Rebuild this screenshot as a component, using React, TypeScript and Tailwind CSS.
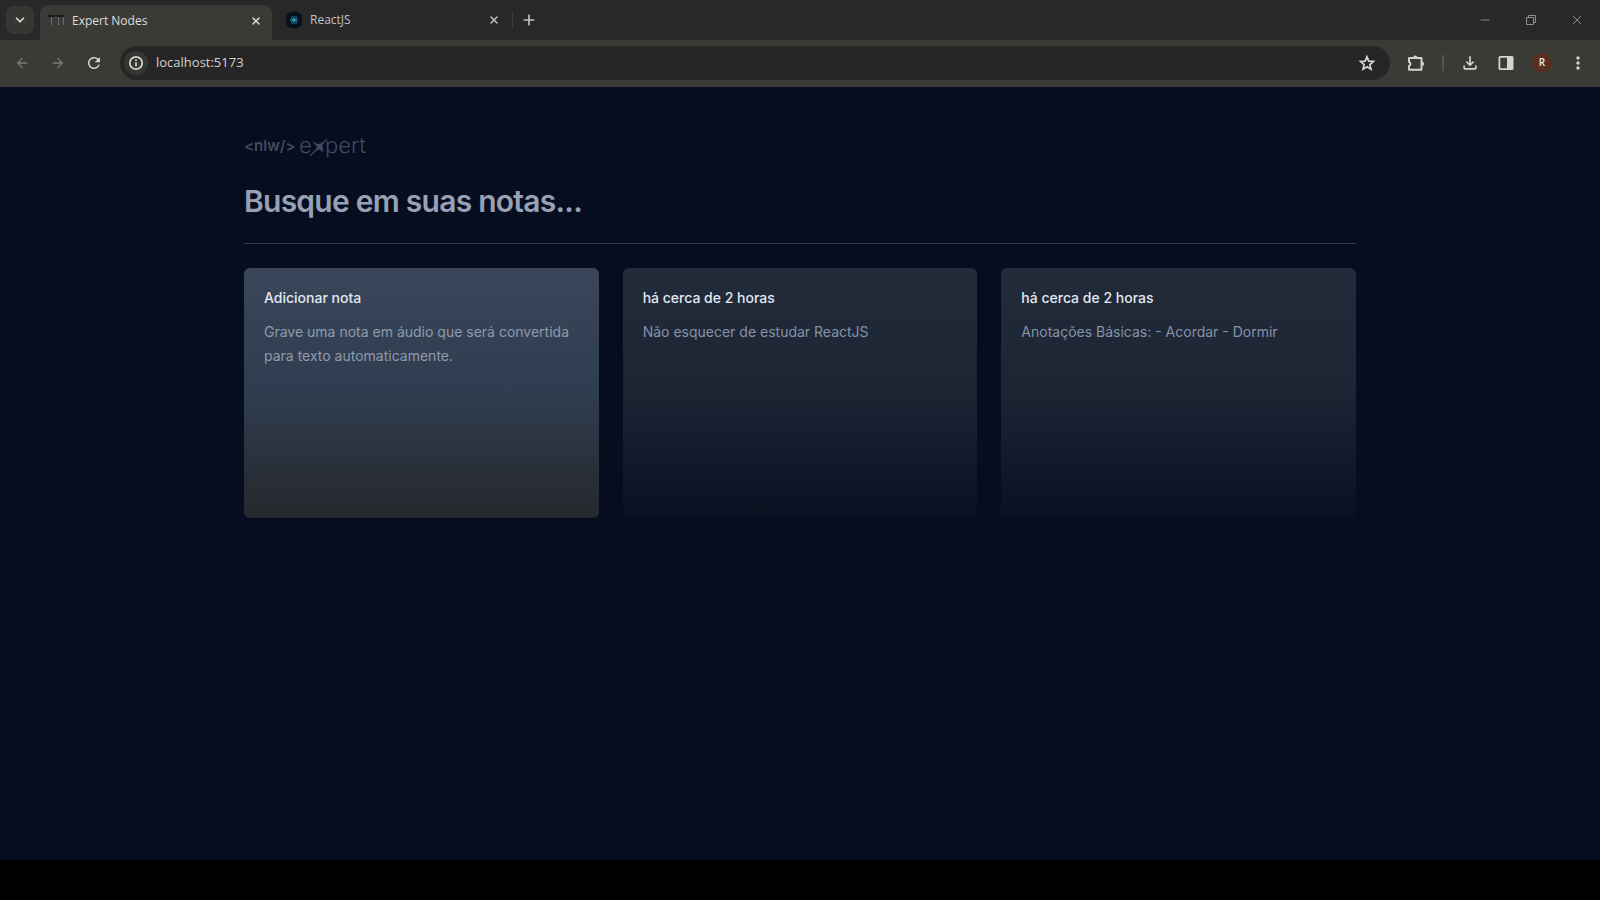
import { ChevronDown, Minus, Plus, X } from 'lucide-react';
import { MdOutlineFileDownload, MdMoreVert, MdRefresh, MdArrowBack, MdArrowForward } from 'react-icons/md';

const notes = [
  { date: 'há cerca de 2 horas', content: 'Não esquecer de estudar ReactJS' },
  { date: 'há cerca de 2 horas', content: 'Anotações Básicas: - Acordar - Dormir' },
];

function ExpertIcon() {
  return (
    <svg viewBox="0 0 16 12" className="h-3 w-4" fill="none" stroke="#8b8b96" aria-hidden="true">
      <path d="M0 1h7M8.500 1h7.500" stroke="#0c0c14" strokeWidth="1.400" />
      <path d="M3.500 2v8M10.500 2v8M15.500 2v8" strokeWidth=".600" />
    </svg>
  );
}

function ReactIcon() {
  return (
    <svg viewBox="0 0 16 16" className="size-4" aria-hidden="true">
      <rect width="16" height="16" rx="6" fill="#06101f" />
      <g fill="none" stroke="#1d6579" strokeWidth=".9">
        <ellipse cx="8" cy="8" rx="4" ry="1.7" />
        <ellipse cx="8" cy="8" rx="4" ry="1.7" transform="rotate(60 8 8)" />
        <ellipse cx="8" cy="8" rx="4" ry="1.7" transform="rotate(120 8 8)" />
      </g>
      <circle cx="8" cy="8" r="1.8" fill="#2798ab" />
    </svg>
  );
}

function InfoIcon() {
  return (
    <svg viewBox="0 0 16 16" className="size-4" fill="none" stroke="currentColor" strokeWidth="1.700" aria-hidden="true">
      <circle cx="8" cy="8" r="6.200" />
      <path d="M8 7.200v4M8 4.500v1.600" />
    </svg>
  );
}

function StarIcon() {
  return (
    <svg viewBox="0 0 18 18" className="size-[18px]" fill="none" stroke="currentColor" strokeWidth="1.700" aria-hidden="true">
      <path d="m9 2.800 1.800 4.300 4.700.4-3.600 3.100 1.100 4.600L9 12.700l-4 2.500 1.100-4.600L2.500 7.500l4.700-.4L9 2.800Z" />
    </svg>
  );
}

function ExtensionIcon() {
  return (
    <svg viewBox="0 0 20 20" className="size-5" aria-hidden="true">
      <path d="M3 5h12.500v11.800H3v-3.900a2.100 2.100 0 0 0 0-4V5Z" fill="none" stroke="currentColor" strokeWidth="1.900" strokeLinejoin="round" />
      <path d="M7.200 4.500a2.100 2.100 0 0 1 4.200 0ZM16 8.800a2.100 2.100 0 0 1 0 4.200Z" fill="currentColor" />
    </svg>
  );
}

function Logo() {
  return (
    <svg viewBox="0 0 126 24" className="h-6 w-[126px] overflow-visible" role="img" aria-label="nlw expert" fill="#414a62">
      <text x="0" y="16" fontSize="15" fontWeight="600" fontFamily="Inter, sans-serif">&lt;nlw/&gt;</text>
      <text x="55" y="18" fontSize="22" fontWeight="300" fontFamily="Inter, sans-serif">e</text>
      <path d="m66 21 17-17M69.500 7l9.500 10" stroke="#414a62" strokeWidth="1.200" fill="none" />
      <path d="m71 8 4 1 4-2-1 4 2 4-4-1-4 2 1-4Z" />
      <text x="81" y="18" fontSize="22" fontWeight="300" fontFamily="Inter, sans-serif">pert</text>
    </svg>
  );
}

function BrowserChrome() {
  return (
    <header className="font-['Open_Sans','Noto_Sans',sans-serif] text-xs text-[#dededc]">
      <div className="flex h-10 items-center bg-[#282829]">
        <button aria-label="Search tabs" className="ml-1.5 grid size-7 place-items-center rounded-lg bg-[#363632]">
          <ChevronDown className="size-3.5" strokeWidth={3} />
        </button>
        <div className="ml-1.5 flex h-full w-[232px] items-end">
          <div className="flex h-[35px] w-full items-center gap-2 rounded-t-lg bg-[#3a3a36] pr-2 pb-1 pl-2">
            <ExpertIcon />
            <span className="flex-1">Expert Nodes</span>
            <button aria-label="Close Expert Nodes" className="grid size-4 place-items-center"><X className="size-3" strokeWidth={3} /></button>
          </div>
        </div>
        <div className="flex w-[241px] items-center gap-2 border-r border-[#3c3c36] pr-2.5 pl-3.5 text-[#c2c2c0]">
          <ReactIcon />
          <span className="flex-1">ReactJS</span>
          <button aria-label="Close ReactJS" className="grid size-4 place-items-center"><X className="size-3" strokeWidth={3} /></button>
        </div>
        <button aria-label="New tab" className="ml-2 grid size-4 place-items-center text-[#c2c2c0]"><Plus className="size-4" strokeWidth={2.5} /></button>
        <div className="ml-auto flex text-[#8f8f88]">
          <button aria-label="Minimize" className="grid w-[46px] place-items-center"><Minus className="size-3.5" strokeWidth={1.5} /></button>
          <button aria-label="Restore" className="grid w-[46px] place-items-center">
            <svg viewBox="0 0 12 12" className="size-3" fill="none" stroke="currentColor"><path d="M1.500 3.500h7v7h-7ZM3.500 3V1.500h7v7H9" /></svg>
          </button>
          <button aria-label="Close window" className="grid w-[46px] place-items-center"><X className="size-4" strokeWidth={1.5} /></button>
        </div>
      </div>
      <div className="flex h-[47px] items-center bg-[#3a3a36] px-3 pb-0.5 text-[#d3d3d0]">
        <div className="flex gap-4">
          <button aria-label="Back" className="grid size-5 place-items-center text-[#7d7d78]"><MdArrowBack className="size-4" /></button>
          <button aria-label="Forward" className="grid size-5 place-items-center text-[#7d7d78]"><MdArrowForward className="size-4" /></button>
          <button aria-label="Reload" className="grid size-5 place-items-center"><MdRefresh className="size-[18px]" /></button>
        </div>
        <div className="mr-4 ml-4 flex h-[34px] flex-1 items-center rounded-full bg-[#262627] pr-3.5 pl-1">
          <button aria-label="Site information" className="grid size-6 place-items-center rounded-full bg-[#363632]"><InfoIcon /></button>
          <input aria-label="Address" defaultValue="localhost:5173" className="ml-2 min-w-0 flex-1 bg-transparent text-[13px] outline-none" />
          <button aria-label="Bookmark this page"><StarIcon /></button>
        </div>
        <div className="flex items-center">
          <button aria-label="Extensions"><ExtensionIcon /></button>
          <span className="mx-4 h-4 w-0.5 bg-[#55554e]" />
          <button aria-label="Downloads"><MdOutlineFileDownload className="size-5" stroke="currentColor" /></button>
          <button aria-label="Side panel" className="ml-4">
            <svg viewBox="0 0 20 20" className="size-5" fill="currentColor"><path fillRule="evenodd" d="M4 3h12a1.500 1.500 0 0 1 1.500 1.500v11A1.500 1.500 0 0 1 16 17H4a1.500 1.500 0 0 1-1.500-1.500v-11A1.500 1.500 0 0 1 4 3Zm.300 1.700v10.600H11V4.700Z" /></svg>
          </button>
          <button aria-label="Profile" className="ml-4 grid size-5 place-items-center rounded-full bg-[#56301f] text-[10px] font-semibold text-[#e8e8e6]">R</button>
          <button aria-label="Menu" className="ml-4"><MdMoreVert className="size-5" /></button>
        </div>
      </div>
    </header>
  );
}

export default function App() {
  return (
    <div className="flex min-h-screen flex-col bg-black">
      <BrowserChrome />
      <main className="flex-1 bg-[#050d1f] font-[Inter,sans-serif]">
        <div className="mx-auto max-w-[1112px] space-y-6 pt-12">
          <Logo />
          <form>
            <input aria-label="Busque em suas notas" placeholder="Busque em suas notas..." className="w-full bg-transparent text-3xl font-semibold tracking-tight outline-none placeholder:text-[#97a0b5]" />
          </form>
          <div className="h-px bg-[#343b4f]" />
          <div className="grid auto-rows-[250px] grid-cols-3 gap-6">
            <button className="flex flex-col gap-3 rounded-md bg-linear-to-b from-[#3a4659] via-[#2f3d50] to-[#25272c] p-5 text-left text-sm">
              <span className="font-medium text-slate-200">Adicionar nota</span>
              <p className="leading-6 text-[#8f9aae]">Grave uma nota em áudio que será convertida para texto automaticamente.</p>
            </button>
            {notes.map((note) => (
              <button key={note.content} className="flex flex-col gap-3 rounded-md bg-linear-to-b from-[#222b3a] via-[#1b2534] to-[#091121] p-5 text-left text-sm">
                <span className="font-medium text-slate-200">{note.date}</span>
                <p className="leading-6 text-[#8792a7]">{note.content}</p>
              </button>
            ))}
          </div>
        </div>
      </main>
      <footer className="h-10" />
    </div>
  );
}
